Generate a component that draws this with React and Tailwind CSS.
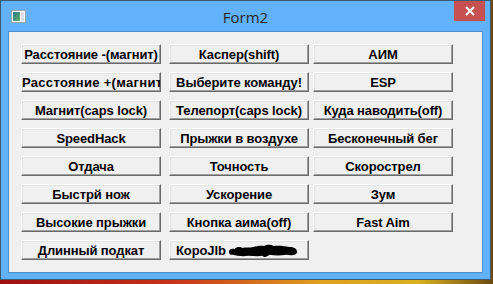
import React from "react";

const rows = [
  ["Расстояние -(магнит)", "Каспер(shift)", "АИМ"],
  ["Расстояние +(магнит)", "Выберите команду!", "ESP"],
  ["Магнит(caps lock)", "Телепорт(caps lock)", "Куда наводить(off)"],
  ["SpeedHack", "Прыжки в воздухе", "Бесконечный бег"],
  ["Отдача", "Точность", "Скорострел"],
  ["Быстрй нож", "Ускорение", "Зум"],
  ["Высокие прыжки", "Кнопка аима(off)", "Fast Aim"],
];

function Btn({ children, className = "" }) {
  return (
    <div
      className={
        "w-[140px] h-[20px] flex items-center justify-center-safe overflow-hidden whitespace-nowrap " +
        "bg-[#f0f0f0] border-t border-l border-white border-b border-r border-b-[#696969] border-r-[#696969] " +
        "shadow-[inset_-1px_-1px_0_#a0a0a0,inset_1px_1px_0_#e3e3e3] text-black font-bold text-[13px] leading-none " +
        className
      }
      style={{ fontFamily: '"Liberation Sans", Arial, sans-serif' }}
    >
      {children}
    </div>
  );
}

function Blob() {
  return (
    <svg width="70" height="16" viewBox="0 0 72 16" className="shrink-0 ml-[2px]">
      <path
        d="M1 10 C1 7 4 6 7 7 C9 4 13 5 15 6 C18 5 22 6 26 5 C30 4 33 3 37 4 C40 2 44 2 47 4 C52 3 58 4 63 5 C68 5 71 7 71 10 C71 13 66 14 60 13 C54 14 48 14 43 13 C40 15 37 16 35 14 C31 15 26 14 21 14 C15 15 9 14 5 13 C2 13 1 12 1 10 Z"
        fill="#000"
      />
    </svg>
  );
}

export default function App() {
  return (
    <div className="w-[493px] h-[284px] overflow-hidden bg-[linear-gradient(90deg,#9c1010_0%,#c8321a_35%,#e0a020_65%,#d8b020_85%,#6b4a10_100%)]">
      <div className="w-[491px] h-[280px] border border-[#3a5a7a] bg-[#62b1fb] flex flex-col">
        {/* TITLE BAR */}
        <div className="h-[30px] relative flex items-center justify-center">
          <div className="absolute left-[10px] top-[9px] w-[15px] h-[13px] border border-[#9aa4ae] bg-white flex p-[1px]">
            <div className="w-[7px] h-full bg-[linear-gradient(135deg,#2a7a8a,#5fae6a)]" />
            <div className="w-[1px]" />
            <div className="flex-1 bg-[#d8dde2]" />
          </div>
          <span
            className="text-[15px] text-[#262626] mt-[2px]"
            style={{ fontFamily: '"Open Sans", "Noto Sans", sans-serif' }}
          >
            Form2
          </span>
          <div className="absolute right-[5px] top-0 w-[31px] h-[20px] bg-[#c75050] flex items-center justify-center">
            <svg width="10" height="10" viewBox="0 0 10 10">
              <path d="M1 1 L9 9 M9 1 L1 9" stroke="#fff" strokeWidth="2" />
            </svg>
          </div>
        </div>

        {/* CLIENT */}
        <div className="mx-[7px] h-[242px] border border-[#4b8fd0] bg-[#f0f0f0] pl-[12px] pt-[12px] flex flex-col gap-[8px]">
          {rows.map((r, i) => (
            <div key={i} className="flex">
              <Btn className={i === 1 ? "tracking-[0.3px] !justify-start" : "tracking-[-0.1px]"}>{r[0]}</Btn>
              <Btn className="ml-[8px] tracking-[-0.1px]">{r[1]}</Btn>
              <Btn className="ml-[4px] tracking-[-0.1px]">{r[2]}</Btn>
            </div>
          ))}
          <div className="flex">
            <Btn className="tracking-[-0.1px]">Длинный подкат</Btn>
            <Btn className="ml-[8px] !justify-start pl-[6px] tracking-[-0.1px]">
              <span>КороJlb</span>
              <Blob />
            </Btn>
          </div>
        </div>
      </div>
    </div>
  );
}
